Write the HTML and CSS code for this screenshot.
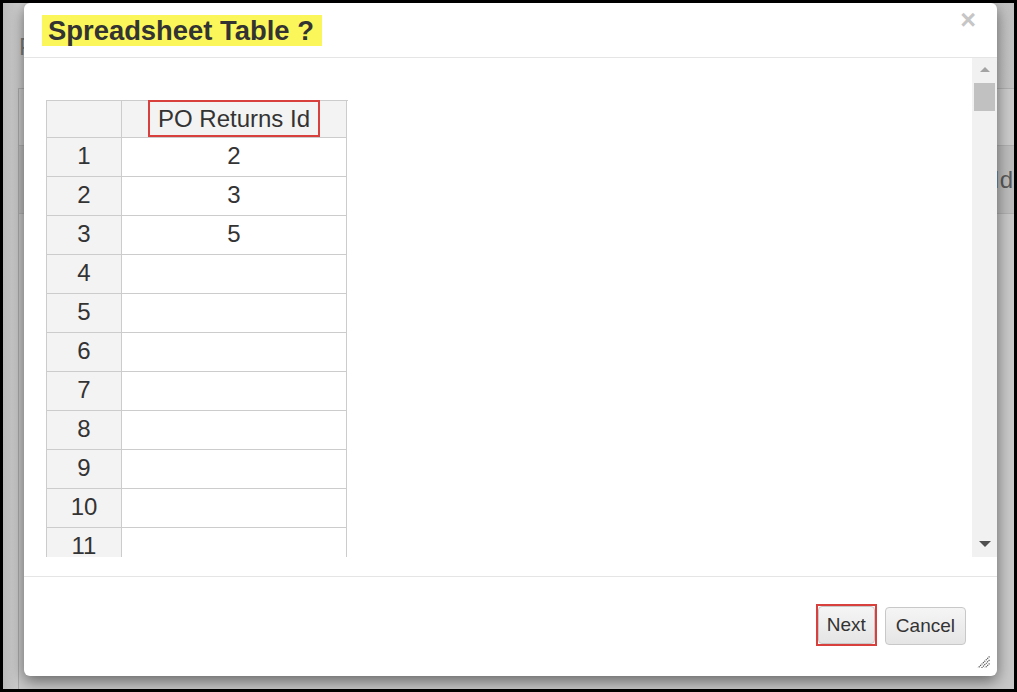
FILE: index.html
```html
<!DOCTYPE html>
<html lang="en">
<head>
<meta charset="utf-8">
<title>Spreadsheet Table</title>
<link rel="stylesheet" href="styles.css">
</head>
<body>
<div class="screen">
  <div class="page">
    <div class="page-title">Purchase Returns</div>
    <div class="panel">
      <div class="panel-row panel-top"></div>
      <div class="panel-row panel-head"><span>PO Returns Id</span></div>
      <div class="panel-row panel-rest"></div>
    </div>
  </div>

  <div class="modal">
    <div class="modal-header">
      <h4 class="modal-title">Spreadsheet Table ?</h4>
      <span class="close">&times;</span>
    </div>
    <div class="modal-body">
      <div class="viewport">
        <div class="sheet">
          <div class="cell corner"></div>
          <div class="cell colhead"><span class="annot-head">PO Returns Id</span></div>
          <div class="cell rowhead">1</div><div class="cell data">2</div>
          <div class="cell rowhead">2</div><div class="cell data">3</div>
          <div class="cell rowhead">3</div><div class="cell data">5</div>
          <div class="cell rowhead">4</div><div class="cell data"></div>
          <div class="cell rowhead">5</div><div class="cell data"></div>
          <div class="cell rowhead">6</div><div class="cell data"></div>
          <div class="cell rowhead">7</div><div class="cell data"></div>
          <div class="cell rowhead">8</div><div class="cell data"></div>
          <div class="cell rowhead">9</div><div class="cell data"></div>
          <div class="cell rowhead">10</div><div class="cell data"></div>
          <div class="cell rowhead">11</div><div class="cell data"></div>
          <div class="cell rowhead">12</div><div class="cell data"></div>
        </div>
      </div>
      <div class="scrollbar">
        <span class="arrow-up"></span>
        <span class="thumb"></span>
        <span class="arrow-down"></span>
      </div>
    </div>
    <div class="modal-footer">
      <span class="annot-btn"><button class="btn btn-next">Next</button></span>
      <button class="btn">Cancel</button>
    </div>
    <svg class="grip" width="13" height="12" viewBox="0 0 13 12">
      <g stroke="#555" stroke-width="1.2" stroke-dasharray="1.2 0.8">
        <line x1="12.5" y1="0.5" x2="1" y2="12"/>
        <line x1="12.5" y1="4" x2="4.5" y2="12"/>
        <line x1="12.5" y1="7.5" x2="8" y2="12"/>
      </g>
    </svg>
  </div>
</div>
</body>
</html>
```

FILE: styles.css
```css
html, body {
  margin: 0;
  padding: 0;
  background: #000;
}

body {
  font-family: "Liberation Sans", Arial, sans-serif;
  color: #333;
}

.screen {
  position: relative;
  margin: 3px 0 0 3px;
  width: 1011px;
  height: 686px;
  overflow: hidden;
  background: linear-gradient(to right, #bababa 0, #cdcdcd 16px, #c6c6c6 40px, #c6c6c6 980px, #c2c2c2 1011px);
}

/* dimmed page behind the dialog */
.page {
  padding: 30px 0 0 16px;
}

.page-title {
  font-size: 24px;
  line-height: 28px;
  color: #7e7e7e;
}

.panel {
  margin-top: 27px;
  margin-left: -1px;
  width: 1010px;
  border-left: 1px solid #a9a9a9;
  border-top: 1px solid #b0b0b0;
}

.panel-row {
  border-bottom: 1px solid #b0b0b0;
}

.panel-top {
  height: 56px;
  background: #cbcbcb;
}

.panel-head {
  height: 67px;
  background: #bdbdbd;
  display: flex;
  justify-content: flex-end;
  align-items: center;
  padding-right: 16px;
  font-size: 24px;
  color: #5a5a5a;
}

.panel-rest {
  height: 500px;
  border-bottom: none;
  background: #c9c9c9;
}

/* dialog */
.modal {
  position: absolute;
  left: 21px;
  top: 0;
  width: 973px;
  height: 673px;
  background: #fff;
  border-radius: 6px;
  box-shadow: 0 5px 15px rgba(0, 0, 0, 0.5);
  display: flex;
  flex-direction: column;
}

.modal-header {
  position: relative;
  box-sizing: border-box;
  height: 55px;
  padding: 12px 0 0 18px;
  border-bottom: 1px solid #e5e5e5;
}

.modal-title {
  display: inline-block;
  margin: 0;
  padding: 0 8px 0 6px;
  height: 31px;
  line-height: 31px;
  font-size: 27.4px;
  font-weight: bold;
  color: #333;
  background: #fbf75a;
}

.close {
  position: absolute;
  top: 4px;
  right: 21px;
  font-size: 27px;
  line-height: 1;
  font-weight: bold;
  color: #c6c6c6;
}

.modal-body {
  box-sizing: border-box;
  height: 518px;
  padding-bottom: 19px;
  display: flex;
}

.viewport {
  flex: 1;
  overflow: hidden;
  padding: 42px 0 0 22px;
}

.sheet {
  display: grid;
  grid-template-columns: 75px 225px;
  grid-template-rows: 37px;
  grid-auto-rows: 39px;
  width: 301px;
  border-top: 1px solid #ccc;
  border-left: 1px solid #ccc;
  font-size: 24px;
}

.cell {
  box-sizing: border-box;
  border-right: 1px solid #ccc;
  border-bottom: 1px solid #ccc;
  text-align: center;
  line-height: 36px;
  color: #333;
}

.corner,
.colhead {
  height: 37px;
  background: #f3f3f3;
}

.rowhead {
  background: #f3f3f3;
}

.data {
  background: #fff;
}

.colhead {
  display: flex;
  justify-content: center;
  align-items: flex-start;
}

.annot-head {
  box-sizing: border-box;
  height: 37px;
  margin-top: -1px;
  padding: 0 8px;
  border: 2px solid #d8403e;
  line-height: 33px;
}

.scrollbar {
  width: 25px;
  background: #f1f1f1;
  display: flex;
  flex-direction: column;
  align-items: center;
}

.arrow-up {
  margin-top: 9px;
  width: 0;
  height: 0;
  border-left: 5px solid transparent;
  border-right: 5px solid transparent;
  border-bottom: 5px solid #a3a3a3;
}

.thumb {
  margin-top: 11px;
  width: 21px;
  height: 28px;
  background: #c1c1c1;
}

.arrow-down {
  margin-top: auto;
  margin-bottom: 10px;
  width: 0;
  height: 0;
  border-left: 6px solid transparent;
  border-right: 6px solid transparent;
  border-top: 6px solid #505050;
}

.modal-footer {
  box-sizing: border-box;
  height: 100px;
  border-top: 1px solid #e5e5e5;
  display: flex;
  justify-content: flex-end;
  align-items: center;
  gap: 8px;
  padding: 0 31px 2px 0;
}

.btn {
  box-sizing: border-box;
  height: 38px;
  padding: 0 10px;
  font-family: "Liberation Sans", Arial, sans-serif;
  font-size: 19px;
  color: #333;
  background: linear-gradient(#f5f5f5, #e5e5e5);
  border: 1px solid #c8c8c8;
  border-radius: 4px;
}

.annot-btn {
  display: inline-flex;
  border: 2px solid #d8403e;
  padding: 0;
  margin-top: -2px;
}

.btn-next {
  width: 57px;
  padding: 0;
}

.grip {
  position: absolute;
  right: 7px;
  bottom: 8px;
}
```
